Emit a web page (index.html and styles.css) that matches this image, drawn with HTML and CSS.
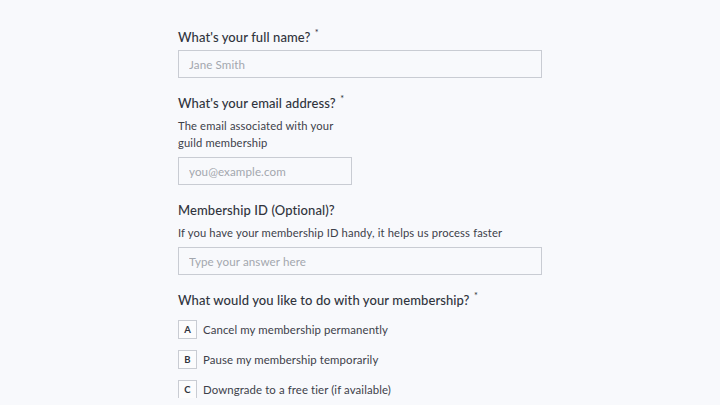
FILE: index.html
```html
<!DOCTYPE html>
<html lang="en">
<head>
    <meta charset="UTF-8">
    <title>Membership request</title>
    <link rel="stylesheet" href="styles.css">
</head>
<body>
    <div class="form">
        <!-- Имя -->
        <div class="field">
            <h3 class="label">What's your full name? <span class="req">*</span></h3>
            <input class="text-input" type="text" placeholder="Jane Smith">
        </div>

        <!-- Почта -->
        <div class="field">
            <h3 class="label">What's your email address? <span class="req">*</span></h3>
            <p class="hint narrow">The email associated with your guild membership</p>
            <input class="text-input short" type="email" placeholder="you@example.com">
        </div>

        <!-- ID -->
        <div class="field">
            <h3 class="label">Membership ID (Optional)?</h3>
            <p class="hint">If you have your membership ID handy, it helps us process faster</p>
            <input class="text-input" type="text" placeholder="Type your answer here">
        </div>

        <!-- Варианты -->
        <div class="field">
            <h3 class="label">What would you like to do with your membership? <span class="req">*</span></h3>
            <div class="choices">
                <div class="choice"><span class="key">A</span>Cancel my membership permanently</div>
                <div class="choice"><span class="key">B</span>Pause my membership temporarily</div>
                <div class="choice"><span class="key">C</span>Downgrade to a free tier (if available)</div>
            </div>
        </div>
    </div>
</body>
</html>
```

FILE: styles.css
```css
* {
    box-sizing: border-box;
}

body {
    margin: 0;
    background: #f8f9fc;
    font-family: "Lato", sans-serif;
    color: #30343d;
}

.form {
    width: 364px;
    margin: 0 auto;
    padding-top: 28px;
    display: flex;
    flex-direction: column;
    gap: 16px;
}

.field {
    display: flex;
    flex-direction: column;
}

.label {
    margin: 0 0 4px;
    font-size: 13px;
    font-weight: 500;
    line-height: 18px;
    letter-spacing: 0.1px;
}

.label:last-child,
.field:last-child .label {
    margin-bottom: 5px;
}

.req {
    margin-left: 1px;
    font-size: 9px;
    line-height: 0;
    vertical-align: 6px;
}

.hint {
    margin: 1px 0 6px;
    font-size: 11.2px;
    line-height: 17px;
    color: #3d414a;
    letter-spacing: 0.15px;
}

.hint.narrow {
    width: 160px;
}

.text-input {
    width: 100%;
    height: 28px;
    padding: 0 10px;
    border: 1px solid #c9ccd3;
    background: #f8f9fc;
    font-family: inherit;
    font-size: 11.6px;
    letter-spacing: 0.1px;
    color: #30343d;
    outline: none;
}

.text-input::placeholder {
    color: #a3a7ae;
}

.text-input.short {
    width: 174px;
}

.choices {
    margin-top: 6px;
    display: flex;
    flex-direction: column;
    gap: 12px;
}

.choice {
    display: flex;
    align-items: center;
    gap: 6px;
    height: 18px;
    font-size: 11.4px;
    color: #3d414a;
    letter-spacing: 0.1px;
}

.key {
    width: 19px;
    height: 19px;
    display: flex;
    align-items: center;
    justify-content: center;
    border: 1px solid #c9ccd3;
    background: #fcfcfd;
    font-size: 9.5px;
    font-weight: 700;
    color: #30343d;
}
```
